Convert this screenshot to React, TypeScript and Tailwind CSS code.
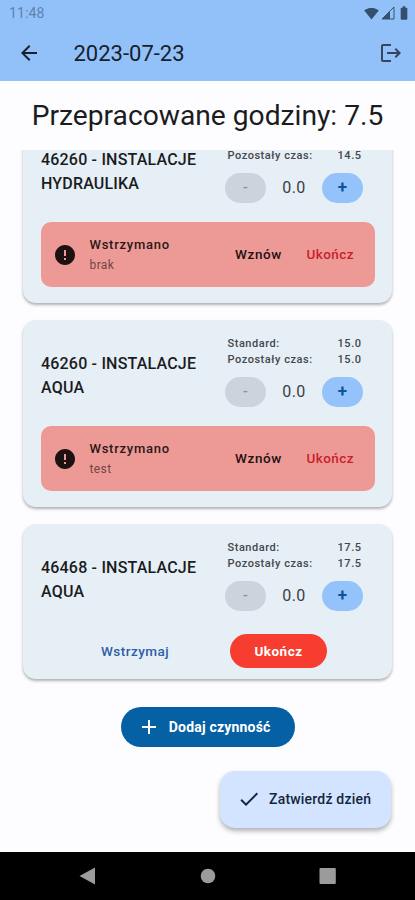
import {
  MdAdd,
  MdArrowBack,
  MdBatteryFull,
  MdCheck,
  MdError,
  MdLogout,
  MdSignalWifi4Bar,
} from "react-icons/md";

type Task = {
  id: string;
  code: string;
  name: string;
  standard: string;
  remaining: string;
  hours: string;
  pausedReason?: string;
};

const tasks: Task[] = [
  {
    id: "1",
    code: "46260 - INSTALACJE",
    name: "HYDRAULIKA",
    standard: "15.0",
    remaining: "14.5",
    hours: "0.0",
    pausedReason: "brak",
  },
  {
    id: "2",
    code: "46260 - INSTALACJE",
    name: "AQUA",
    standard: "15.0",
    remaining: "15.0",
    hours: "0.0",
    pausedReason: "test",
  },
  {
    id: "3",
    code: "46468 - INSTALACJE",
    name: "AQUA",
    standard: "17.5",
    remaining: "17.5",
    hours: "0.0",
  },
];

function StatusBar() {
  return (
    <div className="flex h-[26px] items-center justify-between pr-[3px] pl-[9px] text-[#35506e]">
      <span className="text-[14px] leading-none tracking-[0.1px] text-[#5d83b0]">
        11:48
      </span>
      <div className="flex items-center">
        <MdSignalWifi4Bar className="size-[15px]" />
        <svg viewBox="0 0 14 14" className="ml-[2px] size-[14px]">
          <path d="M1 13 13 1v12z" fill="none" stroke="currentColor" />
          <path d="M1 13 9 5v8z" fill="currentColor" />
        </svg>
        <MdBatteryFull className="ml-[1.5px] size-4" />
      </div>
    </div>
  );
}

function PausedBanner({ reason }: { reason: string }) {
  return (
    <div className="mt-[19px] flex h-[65px] items-center rounded-[10px] bg-[#ed9a96] pr-[21px] pl-3">
      <MdError className="size-6 text-[#1d1112]" />
      <div className="ml-[12.5px] flex-1 pt-px">
        <p className="text-[13px] leading-5 font-medium tracking-[0.74px] text-[#2b1718]">
          Wstrzymano
        </p>
        <p className="text-[12px] leading-5 tracking-[0.4px] text-[#6f4649]">
          {reason}
        </p>
      </div>
      <button className="text-[13.5px] font-medium tracking-[0.6px] text-[#1f1112]">
        Wznów
      </button>
      <button className="ml-[24.5px] text-[13.5px] font-medium tracking-[0.45px] text-[#c9202b]">
        Ukończ
      </button>
    </div>
  );
}

function TaskCard({ task }: { task: Task }) {
  return (
    <section className="rounded-[13px] bg-[#e6eef6] pt-[15.5px] pr-[16.5px] pb-4 pl-[18px] shadow-[0_2px_3px_rgba(0,0,0,0.3)]">
      <div className="flex h-[72px] justify-between">
        <h2 className="pt-[17px] text-[16px] leading-[24.3px] font-medium tracking-[0.19px] text-[#1a1c1e]">
          {task.code}
          <br />
          {task.name}
        </h2>
        <div className="w-[150px] pr-[12px]">
          <div className="pt-px pr-[1.5px] pl-[2.5px] text-[11px] leading-4 font-medium tracking-[0.53px] text-[#43474c]">
            <div className="flex justify-between">
              <span>Standard:</span>
              <span>{task.standard}</span>
            </div>
            <div className="flex justify-between">
              <span>Pozostały czas:</span>
              <span>{task.remaining}</span>
            </div>
          </div>
          <div className="mt-[8.5px] flex items-center justify-between">
            <button className="flex h-[30px] w-[41px] items-center justify-center rounded-full bg-[#ccd3dc] text-[14px] font-medium text-[#8b929a]">
              -
            </button>
            <span className="pt-px text-[16px] tracking-[0.5px] text-[#3b3f44]">
              {task.hours}
            </span>
            <button className="flex h-[30px] w-[41px] items-center justify-center rounded-full bg-[#94c3fb] pt-px text-[17px] font-bold text-[#0b559b]">
              +
            </button>
          </div>
        </div>
      </div>
      {task.pausedReason ? (
        <PausedBanner reason={task.pausedReason} />
      ) : (
        <div className="mt-[22.5px] -mb-[5px] flex h-[34px] items-center pl-[60px]">
          <button className="w-[69px] pt-px text-left text-[13.5px] font-medium tracking-[0.47px] text-[#2d5fa5]">
            Wstrzymaj
          </button>
          <button className="ml-[60px] h-[34px] w-[97px] rounded-full bg-[#f63d30] pt-px text-[13.5px] font-bold tracking-[0.5px] text-white">
            Ukończ
          </button>
        </div>
      )}
    </section>
  );
}

export default function App() {
  return (
    <div className="flex h-[900px] w-[415px] flex-col overflow-hidden bg-[#fdfdff] font-['Roboto',sans-serif]">
      <header className="h-[81px] bg-[#92c1f9]">
        <StatusBar />
        <div className="flex h-[54px] items-center pr-3 pl-[17px]">
          <MdArrowBack className="size-6 text-[#16202c]" />
          <h1 className="ml-[32.5px] flex-1 text-[22px] text-[#17202b]">
            2023-07-23
          </h1>
          <MdLogout className="size-6 text-[#34475d]" />
        </div>
      </header>

      <p className="h-[69px] pt-[17px] text-center text-[28.2px] leading-9 text-[#1a1c1e]">
        Przepracowane godziny: 7.5
      </p>

      <main className="relative min-h-0 flex-1 overflow-hidden pr-[23.5px] pl-[23px]">
        <div className="-mt-[34.5px] flex flex-col gap-[16.5px]">
          {tasks.map((t) => (
            <TaskCard key={t.id} task={t} />
          ))}
        </div>
        <div className="mt-7 flex justify-center pl-px">
          <button className="flex h-10 w-[174px] items-center rounded-full bg-[#0560a4] pl-4 text-[14px] font-bold tracking-[0.2px] text-white">
            <MdAdd className="mr-2 size-6" />
            <span className="pt-px">Dodaj czynność</span>
          </button>
        </div>
        <button className="absolute right-[24px] bottom-[24.5px] flex h-[57px] w-[171px] items-center rounded-[15px] bg-[#d2e4ff] pl-[17px] text-[14px] font-medium tracking-[0.2px] text-[#14263c] shadow-[0_3px_5px_rgba(0,0,0,0.3)]">
          <MdCheck className="mr-2 size-6" />
          <span className="pt-px">Zatwierdź dzień</span>
        </button>
      </main>

      <nav className="flex h-[48px] items-center bg-black text-[#9b9b9b]">
        <svg viewBox="0 0 415 48" className="h-12 w-full" fill="currentColor">
          <path d="M79.5 24 95 15.5v17z" />
          <circle cx="208" cy="24" r="7.3" />
          <rect x="319.5" y="16" width="16.3" height="16" rx="1" />
        </svg>
      </nav>
    </div>
  );
}
